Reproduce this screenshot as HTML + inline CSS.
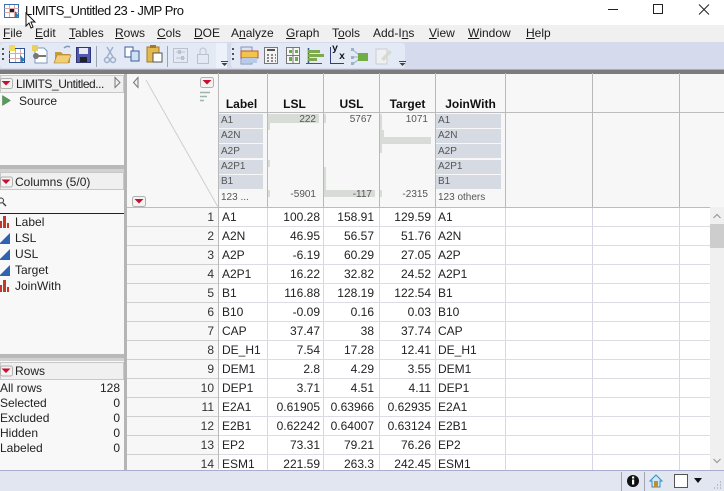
<!DOCTYPE html>
<html><head><meta charset="utf-8">
<style>
html,body{margin:0;padding:0;background:#fff}
#p{position:relative;width:724px;height:491px;overflow:hidden;font:12px "Liberation Sans",sans-serif;color:#222;background:#fff}
#p div,#p span.a,#p svg{position:absolute}
.m{top:26px;line-height:15px;color:#1a1a1a}
.r{position:absolute;left:127px;width:597px;height:19px;line-height:18px}
.r i{position:absolute;font-style:normal;top:0;white-space:nowrap}
.n{right:510px;color:#333}
.l{left:95px}
.a1{right:404px}
.b1{right:350px}
.c1{right:293px}
.j{left:311px}
.h{top:97px;font-weight:bold;line-height:14px;color:#111;text-align:center}
.box{background:#d6dae3}
.s{font-size:10px;line-height:12px;color:#555;white-space:nowrap}
.g{background:#d8dcd6}
.v{top:73px;width:1px;height:134px;background:#b9b9b9}
.w{top:208px;width:1px;height:262px;background:#d8d6e4}
.t{line-height:14px;white-space:nowrap;color:#222}
</style></head><body>
<div id="p">
<!-- title bar -->
<svg style="left:4px;top:2px" width="18" height="18" viewBox="0 0 18 18"><rect x=".5" y="2.5" width="14" height="13" fill="#fff" stroke="#3c6fb0"/><path d="M.5 6.500h14M.5 10.500h14M5.500 3v12M10.500 3v12" stroke="#dba8a8" stroke-width="1"/><rect x="6" y="7" width="4" height="3" fill="#222"/><path d="M11 9l4 5-4 2z" fill="#1f7fb8"/></svg>
<div style="left:25px;top:3px;font-size:13px;line-height:16px;color:#111;letter-spacing:-.5px;white-space:nowrap">LIMITS_Untitled 23 - JMP Pro</div>
<svg style="left:0;top:0" width="724" height="25"><path d="M608 9.500h10" stroke="#222"/><rect x="653.500" y="4.500" width="9" height="9" fill="none" stroke="#222"/><path d="M699 4.500l10 10M709 4.500l-10 10" stroke="#222"/></svg>
<!-- menu -->
<div style="left:0;top:25px;width:724px;height:17px;background:#f0f0f0"></div>
<div class="m" style="left:3px"><u>F</u>ile</div>
<div class="m" style="left:35px"><u>E</u>dit</div>
<div class="m" style="left:69px"><u>T</u>ables</div>
<div class="m" style="left:115px"><u>R</u>ows</div>
<div class="m" style="left:157px"><u>C</u>ols</div>
<div class="m" style="left:194px"><u>D</u>OE</div>
<div class="m" style="left:231px">A<u>n</u>alyze</div>
<div class="m" style="left:286px"><u>G</u>raph</div>
<div class="m" style="left:332px">T<u>o</u>ols</div>
<div class="m" style="left:373px">Add-I<u>n</u>s</div>
<div class="m" style="left:429px"><u>V</u>iew</div>
<div class="m" style="left:468px"><u>W</u>indow</div>
<div class="m" style="left:526px"><u>H</u>elp</div>
<!-- toolbar -->
<div style="left:0;top:42px;width:724px;height:27px;background:#d5daec"></div>
<div style="left:0;top:43px;width:227px;height:25px;background:#e4e9f6;border-radius:3px"></div>
<div style="left:231px;top:43px;width:174px;height:25px;background:#e4e9f6;border-radius:3px"></div>
<div style="left:216px;top:43px;width:11px;height:25px;background:#edf1fa"></div>
<svg style="left:0;top:42px" width="410" height="27" viewBox="0 0 410 27">
<path d="M3 6v2M3 11v2M3 16v2M233 6v2M233 11v2M233 16v2" stroke="#555" stroke-width="2"/>
<rect x="9.500" y="6.500" width="15" height="14" fill="#fff" stroke="#2c4f8f"/><path d="M9 11.500h15M9 16.500h15M15.500 7v13M20.500 7v13" stroke="#dba8a8"/><rect x="9" y="3" width="6" height="6" fill="#f2da5a"/><path d="M20 13l5 5-4 3z" fill="#1f7fb8"/>
<path d="M35 6h9l3 3v12H35z" fill="#fff" stroke="#7e98b9"/><rect x="32" y="3" width="6" height="6" fill="#e8d060"/><circle cx="36" cy="14" r="3" fill="#777"/><path d="M38 13h8v2h-8z" fill="#777"/>
<path d="M55 10h6l2 2h7v9H55z" fill="#c89a3a"/><path d="M57 13h14l-3 8H54z" fill="#f0cf78" stroke="#a87a25" stroke-width=".6"/><path d="M64 6a5 5 0 0 1 6-1" stroke="#7e98b9" stroke-width="1.500" fill="none"/>
<rect x="76.500" y="5.500" width="14" height="15" fill="#5158ad" stroke="#2f3675"/><rect x="79" y="6" width="9" height="6" fill="#e8eaf5"/><rect x="80" y="15" width="7" height="5" fill="#222"/>
<path d="M96.500 4v21" stroke="#9aa2b4"/>
<path d="M107 5l6 10M113 5l-6 10" stroke="#9fb0cc" stroke-width="1.500"/><circle cx="107" cy="18" r="2.500" fill="none" stroke="#9fb0cc" stroke-width="1.500"/><circle cx="113" cy="18" r="2.500" fill="none" stroke="#9fb0cc" stroke-width="1.500"/>
<rect x="125" y="5" width="8" height="10" fill="#fff" stroke="#3c5f9c"/><rect x="131" y="9" width="8" height="10" fill="#cfe0f5" stroke="#3c5f9c"/>
<rect x="147" y="5" width="12" height="15" fill="#e4b94d" stroke="#a07a25"/><rect x="150" y="3" width="6" height="3" fill="#a07a25"/><rect x="153" y="11" width="9" height="9" fill="#fff" stroke="#555"/>
<path d="M167.500 4v21" stroke="#9aa2b4"/>
<rect x="173.500" y="6.500" width="14" height="14" fill="none" stroke="#bcc2cc"/><path d="M176 10h9M176 16h9" stroke="#bcc2cc"/><rect x="178" y="8" width="3" height="4" fill="#bcc2cc"/><rect x="181" y="14" width="3" height="4" fill="#bcc2cc"/>
<rect x="197.500" y="12.500" width="11" height="9" fill="none" stroke="#bcc2cc"/><path d="M200 12V9a3 3 0 0 1 6 0v3" fill="none" stroke="#bcc2cc"/>
<path d="M221 19.500h7" stroke="#444"/><path d="M221.500 21h6l-3 3z" fill="#444"/>
<rect x="241" y="5" width="11" height="17" fill="#dbe4f2" stroke="#7e98b9"/><rect x="241" y="9" width="17" height="7" fill="#f3c34e" stroke="#c0581f"/><rect x="242" y="16" width="15" height="5" fill="#b7cbe8"/>
<rect x="264.500" y="5.500" width="13" height="16" fill="#f3f3f3" stroke="#777"/><path d="M267 8h8" stroke="#555" stroke-width="2"/><path d="M267 13h2M271 13h2M275 13h1M267 16h2M271 16h2M275 16h1M267 19h2M271 19h2M275 19h1" stroke="#666" stroke-width="1.500"/>
<rect x="286.500" y="5.500" width="13" height="16" fill="#f7f7f7" stroke="#777"/><path d="M293 6v15M287 13.500h12" stroke="#777"/><path d="M289 8h3v3h-3zM295 8h3v3h-3zM289 15h3v4h-3zM295 15h3v4h-3z" fill="#6aa84f"/>
<path d="M308.500 6v15" stroke="#2f5a9c" stroke-width="1.500"/><path d="M308 8h12v3h-12zM308 12h16v3h-16zM308 16h9v3h-9z" fill="#7ea850"/><path d="M306 21.500h16" stroke="#2f5a9c"/>
<path d="M330.500 5v16.500H344" stroke="#2f3f7f" fill="none"/>
<path d="M353 8l6 5M353 15h6M353 22l6-5" fill="none" stroke="#9fb0cc"/><rect x="351" y="6" width="3" height="3" fill="#9fb0cc"/><rect x="351" y="14" width="3" height="3" fill="#9fb0cc"/><rect x="351" y="20" width="3" height="3" fill="#9fb0cc"/><rect x="358" y="11" width="10" height="8" fill="#70ad47"/>
<rect x="376" y="7" width="11" height="15" fill="#eef0f2" stroke="#c9cdd2"/><path d="M381 17l8-9 3 2-8 9z" fill="#d8dbcc"/>
<path d="M399 19.500h7" stroke="#444"/><path d="M399.500 21h6l-3 3z" fill="#444"/>
</svg>
<div class="t" style="left:332px;top:44px;font:bold 10px 'Liberation Mono',monospace;color:#111">y</div>
<div class="t" style="left:339px;top:52px;font:bold 10px 'Liberation Mono',monospace;color:#111">x</div>
<!-- dark band -->
<div style="left:0;top:69px;width:724px;height:1px;background:#a5abc0"></div>
<div style="left:0;top:70px;width:724px;height:4px;background:#7c7c7c"></div>
<!-- left panel -->
<div style="left:0;top:74px;width:124px;height:396px;background:#f8f8f8"></div>
<div style="left:124px;top:74px;width:3px;height:396px;background:#b5b5b5"></div>
<div style="left:0;top:165px;width:124px;height:4px;background:#b9b9b9"></div>
<div style="left:0;top:169px;width:124px;height:3px;background:#d2d2d2"></div>
<div style="left:0;top:354px;width:124px;height:4px;background:#b9b9b9"></div>
<div style="left:0;top:358px;width:124px;height:3px;background:#d2d2d2"></div>
<!-- table header part -->
<div style="left:127px;top:74px;width:597px;height:133px;background:#f7f7f7"></div>
<div style="left:127px;top:208px;width:91px;height:262px;background:#f7f7f7"></div>
<div style="left:127px;top:207px;width:597px;height:1px;background:#bcbcbc"></div>
<div style="left:218px;top:112px;width:506px;height:1px;background:#bcbcbc"></div>
<div class="v" style="left:218px;height:396px"></div>
<div class="v" style="left:267px"></div><div class="v" style="left:323px"></div><div class="v" style="left:379px"></div><div class="v" style="left:435px"></div><div class="v" style="left:505px"></div><div class="v" style="left:592px"></div><div class="v" style="left:679px"></div>
<div class="w" style="left:267px"></div><div class="w" style="left:323px"></div><div class="w" style="left:379px"></div><div class="w" style="left:435px"></div><div class="w" style="left:505px"></div><div class="w" style="left:592px"></div><div class="w" style="left:679px"></div>
<svg style="left:127px;top:73px" width="92" height="135"><path d="M19 7L91 134" stroke="#cfcfcf"/><path d="M11 4.500L6.500 9.500 11 14.500z" fill="#f0f0f0" stroke="#777"/><path d="M73 19.500h10M73 23.500h7M73 27.500h4" stroke="#9fb4a8" stroke-width="1.500"/></svg>
<!-- red buttons -->
<svg style="left:0;top:0" width="230" height="380">
<g id="b"><rect x="200.500" y="77.500" width="13" height="10" rx="2" fill="#f3f3f3" stroke="#b0b0b0"/><path d="M202.500 80h9l-4.500 4.500z" fill="#c8102e"/></g>
<rect x="132.500" y="196.500" width="13" height="10" rx="2" fill="#f3f3f3" stroke="#b0b0b0"/><path d="M134.500 199h9l-4.500 4.500z" fill="#c8102e"/>
<rect x=".5" y="75.500" width="123" height="17" fill="#f0f0f0" stroke="#c8c8c8"/>
<rect x=".5" y="78.500" width="12" height="10" rx="2" fill="#f3f3f3" stroke="#b0b0b0"/><path d="M1.500 81h9l-4.500 4.500z" fill="#c8102e"/>
<path d="M115 77.500l5 5-5 5z" fill="#f0f0f0" stroke="#777"/>
<path d="M2.500 95.500v10l8-5z" fill="#5a9a5a" stroke="#3d7a46" stroke-width=".5"/>
<rect x=".5" y="172.500" width="123" height="17" fill="#f0f0f0" stroke="#c8c8c8"/>
<rect x=".5" y="177" width="12" height="10" rx="2" fill="#f3f3f3" stroke="#b0b0b0"/><path d="M1.500 179.500h9l-4.500 4.500z" fill="#c8102e"/>
<circle cx="1" cy="200.500" r="2.500" fill="none" stroke="#333"/><path d="M3 203l3 3" stroke="#333" stroke-width="1.300"/>
<path d="M0 213.500h124" stroke="#222"/>
<g fill="#c0392b"><rect x="0" y="221" width="2" height="7"/><rect x="3" y="216" width="3" height="12"/><rect x="7" y="223" width="2" height="5"/></g>
<g fill="#c0392b"><rect x="0" y="285" width="2" height="7"/><rect x="3" y="280" width="3" height="12"/><rect x="7" y="287" width="2" height="5"/></g>
<path d="M0 243l10-10v11H0zM0 259l10-10v11H0zM0 275l10-10v11H0z" fill="#2f62b0"/>
<rect x=".5" y="362.500" width="123" height="17" fill="#f0f0f0" stroke="#c8c8c8"/>
<rect x=".5" y="366" width="12" height="10" rx="2" fill="#f3f3f3" stroke="#b0b0b0"/><path d="M1.500 368.500h9l-4.500 4.500z" fill="#c8102e"/>
</svg>
<div class="t" style="left:16px;top:77px;letter-spacing:-.45px">LIMITS_Untitled...</div>
<div class="t" style="left:19px;top:94px">Source</div>
<div class="t" style="left:15px;top:175px">Columns (5/0)</div>
<div class="t" style="left:15px;top:215px">Label</div>
<div class="t" style="left:15px;top:231px">LSL</div>
<div class="t" style="left:15px;top:247px">USL</div>
<div class="t" style="left:15px;top:263px">Target</div>
<div class="t" style="left:15px;top:279px">JoinWith</div>
<div class="t" style="left:15px;top:364px">Rows</div>
<div class="t" style="left:0;top:381px">All rows</div><div class="t" style="right:604px;top:381px">128</div>
<div class="t" style="left:0;top:396px">Selected</div><div class="t" style="right:604px;top:396px">0</div>
<div class="t" style="left:0;top:411px">Excluded</div><div class="t" style="right:604px;top:411px">0</div>
<div class="t" style="left:0;top:426px">Hidden</div><div class="t" style="right:604px;top:426px">0</div>
<div class="t" style="left:0;top:441px">Labeled</div><div class="t" style="right:604px;top:441px">0</div>
<!-- column headers -->
<div class="h" style="left:218px;width:47px">Label</div>
<div class="h" style="left:267px;width:55px">LSL</div>
<div class="h" style="left:324px;width:55px">USL</div>
<div class="h" style="left:380px;width:55px">Target</div>
<div class="h" style="left:436px;width:69px">JoinWith</div>
<!-- summaries -->
<div class="box" style="left:219px;top:114px;width:44px;height:14px"></div><div class="box" style="left:219px;top:129px;width:44px;height:14px"></div><div class="box" style="left:219px;top:144px;width:44px;height:14px"></div><div class="box" style="left:219px;top:160px;width:44px;height:14px"></div><div class="box" style="left:219px;top:175px;width:44px;height:14px"></div>
<div class="box" style="left:436px;top:114px;width:65px;height:14px"></div><div class="box" style="left:436px;top:129px;width:65px;height:14px"></div><div class="box" style="left:436px;top:144px;width:65px;height:14px"></div><div class="box" style="left:436px;top:160px;width:65px;height:14px"></div><div class="box" style="left:436px;top:175px;width:65px;height:14px"></div>
<div class="s" style="left:221px;top:115px">A1</div><div class="s" style="left:221px;top:130px">A2N</div><div class="s" style="left:221px;top:146px">A2P</div><div class="s" style="left:221px;top:161px">A2P1</div><div class="s" style="left:221px;top:176px">B1</div><div class="s" style="left:221px;top:192px">123 ...</div>
<div class="s" style="left:438px;top:115px">A1</div><div class="s" style="left:438px;top:130px">A2N</div><div class="s" style="left:438px;top:146px">A2P</div><div class="s" style="left:438px;top:161px">A2P1</div><div class="s" style="left:438px;top:176px">B1</div><div class="s" style="left:438px;top:192px">123 others</div>
<div class="g" style="left:268px;top:114px;width:51px;height:9px"></div><div class="g" style="left:268px;top:123px;width:2px;height:7px"></div><div class="g" style="left:268px;top:160px;width:2px;height:7px"></div><div class="g" style="left:268px;top:190px;width:2px;height:7px"></div>
<div class="g" style="left:324px;top:114px;width:2px;height:9px"></div><div class="g" style="left:324px;top:167px;width:2px;height:23px"></div><div class="g" style="left:324px;top:190px;width:51px;height:7px"></div>
<div class="g" style="left:380px;top:114px;width:2px;height:16px"></div><div class="g" style="left:380px;top:130px;width:4px;height:7px"></div><div class="g" style="left:380px;top:137px;width:51px;height:7px"></div><div class="g" style="left:380px;top:144px;width:2px;height:9px"></div><div class="g" style="left:380px;top:190px;width:2px;height:7px"></div>
<div class="s" style="right:408px;top:114px">222</div><div class="s" style="right:408px;top:189px">-5901</div>
<div class="s" style="right:352px;top:114px">5767</div><div class="s" style="right:352px;top:189px">-117</div>
<div class="s" style="right:296px;top:114px">1071</div><div class="s" style="right:296px;top:189px">-2315</div>
<!-- rows -->
<div class="r" style="top:208px"><i class="n">1</i><i class="l">A1</i><i class="a1">100.28</i><i class="b1">158.91</i><i class="c1">129.59</i><i class="j">A1</i></div>
<div class="r" style="top:227px"><i class="n">2</i><i class="l">A2N</i><i class="a1">46.95</i><i class="b1">56.57</i><i class="c1">51.76</i><i class="j">A2N</i></div>
<div class="r" style="top:246px"><i class="n">3</i><i class="l">A2P</i><i class="a1">-6.19</i><i class="b1">60.29</i><i class="c1">27.05</i><i class="j">A2P</i></div>
<div class="r" style="top:265px"><i class="n">4</i><i class="l">A2P1</i><i class="a1">16.22</i><i class="b1">32.82</i><i class="c1">24.52</i><i class="j">A2P1</i></div>
<div class="r" style="top:284px"><i class="n">5</i><i class="l">B1</i><i class="a1">116.88</i><i class="b1">128.19</i><i class="c1">122.54</i><i class="j">B1</i></div>
<div class="r" style="top:303px"><i class="n">6</i><i class="l">B10</i><i class="a1">-0.09</i><i class="b1">0.16</i><i class="c1">0.03</i><i class="j">B10</i></div>
<div class="r" style="top:322px"><i class="n">7</i><i class="l">CAP</i><i class="a1">37.47</i><i class="b1">38</i><i class="c1">37.74</i><i class="j">CAP</i></div>
<div class="r" style="top:341px"><i class="n">8</i><i class="l">DE_H1</i><i class="a1">7.54</i><i class="b1">17.28</i><i class="c1">12.41</i><i class="j">DE_H1</i></div>
<div class="r" style="top:360px"><i class="n">9</i><i class="l">DEM1</i><i class="a1">2.8</i><i class="b1">4.29</i><i class="c1">3.55</i><i class="j">DEM1</i></div>
<div class="r" style="top:379px"><i class="n">10</i><i class="l">DEP1</i><i class="a1">3.71</i><i class="b1">4.51</i><i class="c1">4.11</i><i class="j">DEP1</i></div>
<div class="r" style="top:398px"><i class="n">11</i><i class="l">E2A1</i><i class="a1">0.61905</i><i class="b1">0.63966</i><i class="c1">0.62935</i><i class="j">E2A1</i></div>
<div class="r" style="top:417px"><i class="n">12</i><i class="l">E2B1</i><i class="a1">0.62242</i><i class="b1">0.64007</i><i class="c1">0.63124</i><i class="j">E2B1</i></div>
<div class="r" style="top:436px"><i class="n">13</i><i class="l">EP2</i><i class="a1">73.31</i><i class="b1">79.21</i><i class="c1">76.26</i><i class="j">EP2</i></div>
<div class="r" style="top:455px"><i class="n">14</i><i class="l">ESM1</i><i class="a1">221.59</i><i class="b1">263.3</i><i class="c1">242.45</i><i class="j">ESM1</i></div>
<!-- row lines -->
<svg style="left:127px;top:208px" width="597" height="262"><path d="M0 18.500h91M0 37.500h91M0 56.500h91M0 75.500h91M0 94.500h91M0 113.500h91M0 132.500h91M0 151.500h91M0 170.500h91M0 189.500h91M0 208.500h91M0 227.500h91M0 246.500h91" stroke="#cfcfcf"/><path d="M92 18.500h505M92 37.500h505M92 56.500h505M92 75.500h505M92 94.500h505M92 113.500h505M92 132.500h505M92 151.500h505M92 170.500h505M92 189.500h505M92 208.500h505M92 227.500h505M92 246.500h505" stroke="#dcdce2"/></svg>
<!-- scrollbar -->
<div style="left:710px;top:207px;width:14px;height:263px;background:#f0f0f0"></div>
<div style="left:710px;top:224px;width:14px;height:24px;background:#cdcdcd"></div>
<svg style="left:710px;top:207px" width="14" height="263"><path d="M3.500 11l3.500-3.500 3.500 3.500" fill="none" stroke="#999" stroke-width="1.200"/><path d="M3.500 252l3.500 3.500 3.500-3.500" fill="none" stroke="#999" stroke-width="1.200"/></svg>
<!-- status bar -->
<div style="left:0;top:470px;width:724px;height:1px;background:#a9aed0"></div>
<div style="left:0;top:471px;width:724px;height:20px;background:#e1e6f0"></div>
<svg style="left:0;top:471px" width="724" height="20"><path d="M621.500 1v19M644.500 1v19" stroke="#a0a6b5"/><circle cx="633" cy="10" r="6" fill="#111"/><rect x="632" y="8.500" width="2.200" height="5" fill="#fff"/><rect x="632" y="5.500" width="2.200" height="2" fill="#fff"/><path d="M650 10l6-6 6 6h-2v6h-8v-6z" fill="#cfe6f5" stroke="#2f8fc8"/><rect x="654" y="10" width="4" height="6" fill="#c09030"/><rect x="674.500" y="3.500" width="13" height="13" fill="#fff" stroke="#555"/><path d="M694 7h8l-4 5z" fill="#111"/><path d="M720 11h1M717 14h1M720 14h1M714 17h1M717 17h1M720 17h1" stroke="#aab0bc" stroke-width="1.500"/></svg>
<!-- cursor -->
<svg style="left:25px;top:12px" width="13" height="19"><path d="M1 1v13l3-3 2 5 2-1-2-5h4z" fill="#fff" stroke="#111"/></svg>
</div>
</body></html>
